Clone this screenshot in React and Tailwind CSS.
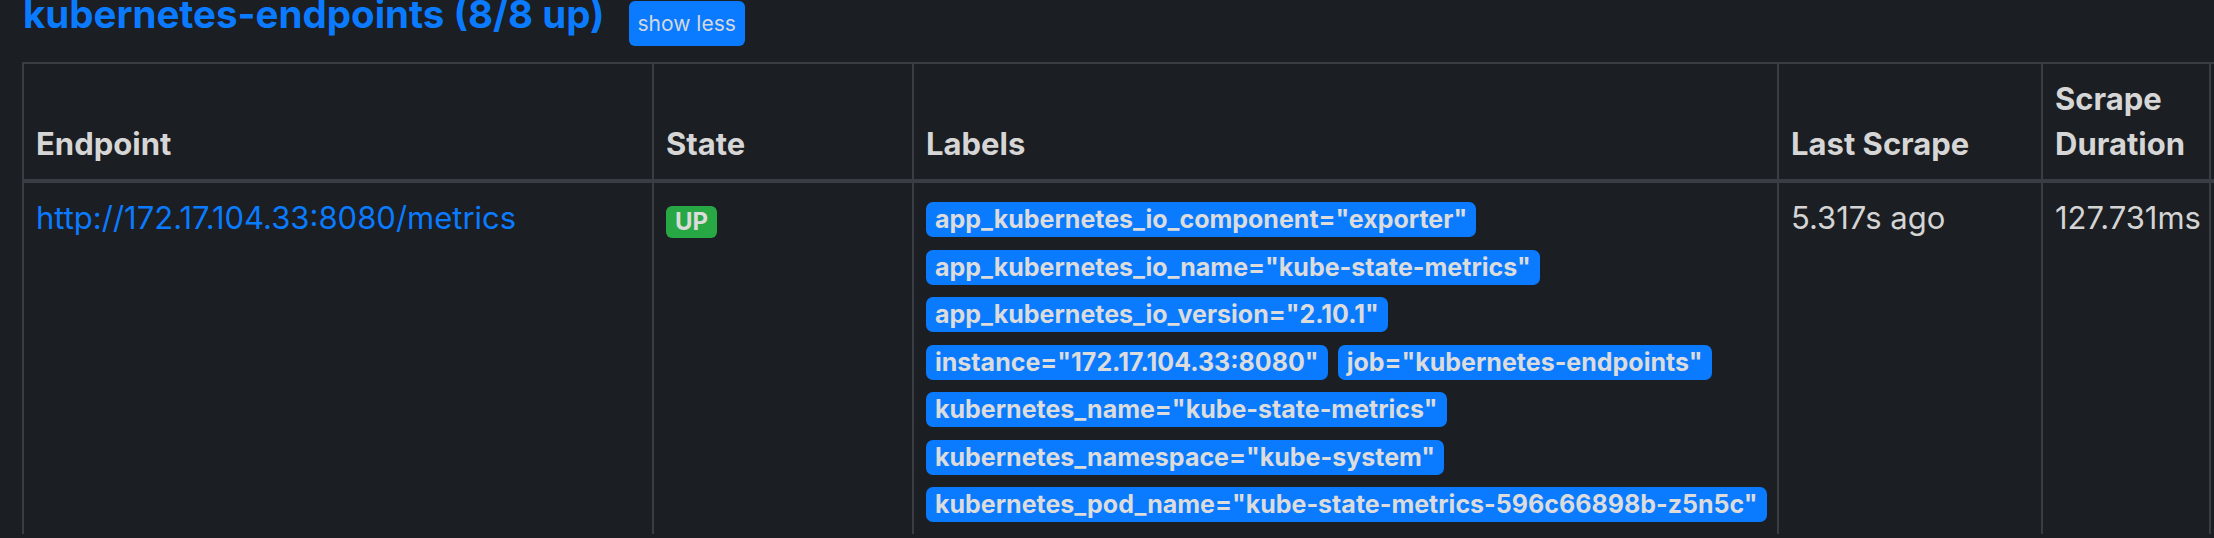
import React from "react";

const labelRows = [
  ['app_kubernetes_io_component="exporter"'],
  ['app_kubernetes_io_name="kube-state-metrics"'],
  ['app_kubernetes_io_version="2.10.1"'],
  ['instance="172.17.104.33:8080"', 'job="kubernetes-endpoints"'],
  ['kubernetes_name="kube-state-metrics"'],
  ['kubernetes_namespace="kube-system"'],
  ['kubernetes_pod_name="kube-state-metrics-596c66898b-z5n5c"'],
];

const th = "border-r-2 border-b-4 border-[#3a3d43] px-3 pt-3 pb-[13px] flex items-end font-bold text-[#d6d6d6]";
const td = "border-r-2 border-[#3a3d43] px-3 pt-3 pb-3";

const App = () => {
  return (
    <div
      className="w-[2214px] h-[538px] overflow-hidden bg-[#1b1e22] text-[31px] leading-[45px] text-[#d4d4d4]"
      style={{ fontFamily: "Inter, 'Noto Sans', sans-serif" }}
    >
      {/* Title */}
      <div className="flex items-start gap-[24px] pl-[23px] h-[46px]">
        <h2 className="-mt-[5px] text-[38.5px] leading-none font-bold text-[#0a7bff]">
          kubernetes-endpoints (8/8 up)
        </h2>
        <button className="mt-[1px] h-[45px] px-[9px] rounded-[6px] bg-[#0a7bff] text-[21px] leading-none text-[#d4d8de]">
          show less
        </button>
      </div>

      {/* Table */}
      <div className="mt-[16px] ml-[22px] border-l-2 border-t-2 border-[#3a3d43] grid grid-cols-[630px_260px_865px_264px_168px_300px]">
        <div className={th}>Endpoint</div>
        <div className={th}>State</div>
        <div className={th}>Labels</div>
        <div className={th}>Last Scrape</div>
        <div className={th}>Scrape Duration</div>
        <div className={th}></div>

        <div className={td}>
          <a className="text-[#0a7bff]">http://172.17.104.33:8080/metrics</a>
        </div>
        <div className={td}>
          <span className="mt-[11px] inline-flex items-center h-[32px] px-[9px] rounded-[6px] bg-[#28a745] text-[24px] leading-none font-bold text-[#dcdcdc]">
            UP
          </span>
        </div>
        <div className={td}>
          <div className="flex flex-col gap-[12.5px] pt-[7px]">
            {labelRows.map((row, i) => (
              <div key={i} className="flex gap-[10px]">
                {row.map((l) => (
                  <span
                    key={l}
                    className="inline-flex items-center h-[35px] px-[9px] rounded-[7px] bg-[#0a7bff] text-[25px] leading-none font-bold text-[#dcdcdc] whitespace-nowrap"
                  >
                    {l}
                  </span>
                ))}
              </div>
            ))}
          </div>
        </div>
        <div className={td}>5.317s ago</div>
        <div className={td}>127.731ms</div>
        <div className={td}></div>
      </div>
    </div>
  );
};

export default App;
